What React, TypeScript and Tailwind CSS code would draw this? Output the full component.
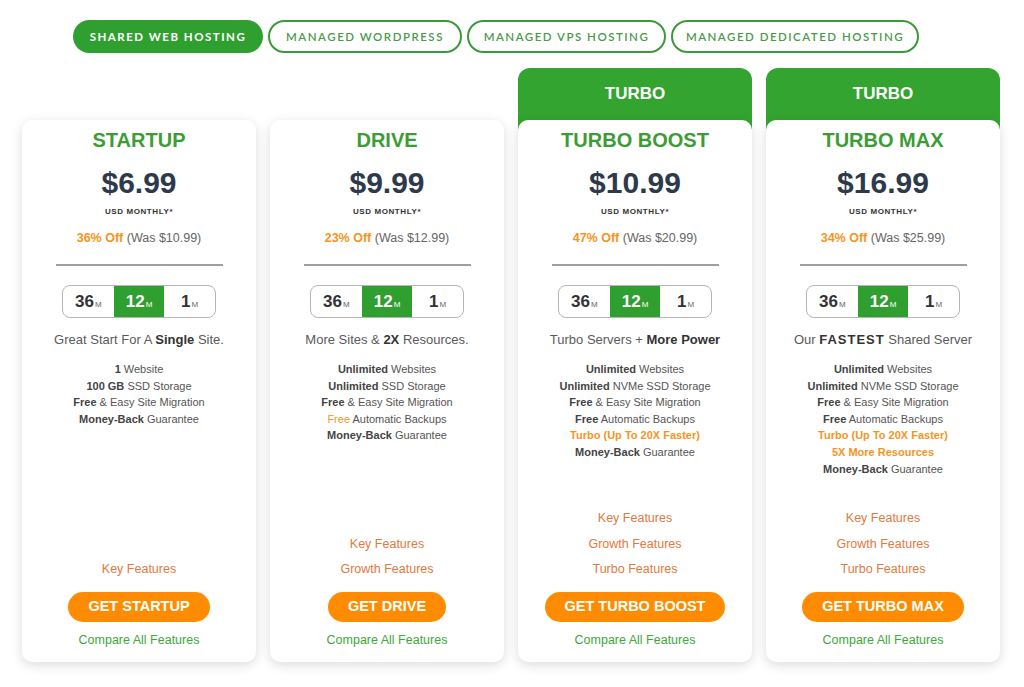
import React from 'react';

type Feature = { parts: Array<{ t: string; b?: boolean; o?: boolean }> };

type Plan = {
  name: string;
  price: string;
  off: string;
  was: string;
  tagline: React.ReactNode;
  features: Feature['parts'][];
  links: string[];
  cta: string;
  turbo?: boolean;
};

const plans: Plan[] = [
  {
    name: 'STARTUP',
    price: '$6.99',
    off: '36% Off',
    was: '(Was $10.99)',
    tagline: (
      <>
        Great Start For A <b className="text-[#333]">Single</b> Site.
      </>
    ),
    features: [
      [{ t: '1', b: true }, { t: ' Website' }],
      [{ t: '100 GB', b: true }, { t: ' SSD Storage' }],
      [{ t: 'Free', b: true }, { t: ' & Easy Site Migration' }],
      [{ t: 'Money-Back', b: true }, { t: ' Guarantee' }],
    ],
    links: ['Key Features'],
    cta: 'GET STARTUP',
  },
  {
    name: 'DRIVE',
    price: '$9.99',
    off: '23% Off',
    was: '(Was $12.99)',
    tagline: (
      <>
        More Sites &amp; <b className="text-[#333]">2X</b> Resources.
      </>
    ),
    features: [
      [{ t: 'Unlimited', b: true }, { t: ' Websites' }],
      [{ t: 'Unlimited', b: true }, { t: ' SSD Storage' }],
      [{ t: 'Free', b: true }, { t: ' & Easy Site Migration' }],
      [{ t: 'Free', o: true }, { t: ' Automatic Backups' }],
      [{ t: 'Money-Back', b: true }, { t: ' Guarantee' }],
    ],
    links: ['Key Features', 'Growth Features'],
    cta: 'GET DRIVE',
  },
  {
    name: 'TURBO BOOST',
    price: '$10.99',
    off: '47% Off',
    was: '(Was $20.99)',
    tagline: (
      <>
        Turbo Servers + <b className="text-[#333]">More Power</b>
      </>
    ),
    features: [
      [{ t: 'Unlimited', b: true }, { t: ' Websites' }],
      [{ t: 'Unlimited', b: true }, { t: ' NVMe SSD Storage' }],
      [{ t: 'Free', b: true }, { t: ' & Easy Site Migration' }],
      [{ t: 'Free', b: true }, { t: ' Automatic Backups' }],
      [{ t: 'Turbo (Up To 20X Faster)', b: true, o: true }],
      [{ t: 'Money-Back', b: true }, { t: ' Guarantee' }],
    ],
    links: ['Key Features', 'Growth Features', 'Turbo Features'],
    cta: 'GET TURBO BOOST',
    turbo: true,
  },
  {
    name: 'TURBO MAX',
    price: '$16.99',
    off: '34% Off',
    was: '(Was $25.99)',
    tagline: (
      <>
        Our <b className="text-[#333] tracking-[1px]">FASTEST</b> Shared Server
      </>
    ),
    features: [
      [{ t: 'Unlimited', b: true }, { t: ' Websites' }],
      [{ t: 'Unlimited', b: true }, { t: ' NVMe SSD Storage' }],
      [{ t: 'Free', b: true }, { t: ' & Easy Site Migration' }],
      [{ t: 'Free', b: true }, { t: ' Automatic Backups' }],
      [{ t: 'Turbo (Up To 20X Faster)', b: true, o: true }],
      [{ t: '5X More Resources', b: true, o: true }],
      [{ t: 'Money-Back', b: true }, { t: ' Guarantee' }],
    ],
    links: ['Key Features', 'Growth Features', 'Turbo Features'],
    cta: 'GET TURBO MAX',
    turbo: true,
  },
];

const tabs = [
  { label: 'SHARED WEB HOSTING', w: 'w-[190px]', active: true },
  { label: 'MANAGED WORDPRESS', w: 'w-[194px]' },
  { label: 'MANAGED VPS HOSTING', w: 'w-[199px]' },
  { label: 'MANAGED DEDICATED HOSTING', w: 'w-[248px]' },
];

function Term({ n, active }: { n: string; active?: boolean }) {
  return (
    <div
      className={`flex-1 flex items-center justify-center ${
        active ? 'bg-[#2f9f2f] text-white' : 'text-[#333]'
      }`}
    >
      <span className="text-[17px] font-bold leading-none">{n}</span>
      <span className={`text-[8px] leading-none mt-[7px] ml-[1px] ${active ? 'text-white' : 'text-[#666]'}`}>M</span>
    </div>
  );
}

function PlanCard({ plan }: { plan: Plan }) {
  return (
    <div className="w-[234px] flex flex-col">
      {plan.turbo ? (
        <div className="h-[62px] -mb-[10px] bg-[#33a42f] rounded-t-[12px] flex justify-center">
          <div className="h-[52px] flex items-center text-white font-bold text-[17px]">TURBO</div>
        </div>
      ) : (
        <div className="h-[52px]" />
      )}
      <div className="relative flex-1 bg-white rounded-[10px] shadow-[0_3px_12px_rgba(0,0,0,0.14)] flex flex-col items-center text-center px-2">
        <div className="pt-2 text-[20px] leading-[24px] font-bold text-[#3c9c36]">{plan.name}</div>
        <div className="mt-[13px] text-[30px] leading-[36px] font-bold text-[#2e3a4b]">{plan.price}</div>
        <div className="mt-[5px] text-[8px] leading-[12px] font-bold text-[#333] tracking-[0.6px]">USD MONTHLY*</div>
        <div className="mt-[12px] text-[12.5px] leading-[16px] text-[#666]">
          <span className="font-bold text-[#f7941d]">{plan.off}</span> {plan.was}
        </div>
        <div className="mt-[18px] w-[167px] h-[2px] bg-[#9aa0a6]" />
        <div className="mt-[19px] w-[154px] h-[33px] border border-[#b5b5b5] rounded-[8px] overflow-hidden flex">
          <Term n="36" />
          <Term n="12" active />
          <Term n="1" />
        </div>
        <div className="mt-[13px] text-[13px] leading-[18px] text-[#5a5a5a]">{plan.tagline}</div>
        <div className="mt-[12px] flex flex-col text-[11px] leading-[16.6px] text-[#555]">
          {plan.features.map((f, i) => (
            <div key={i}>
              {f.map((p, j) => (
                <span
                  key={j}
                  className={`${p.b ? 'font-bold' : ''} ${p.o ? 'text-[#f7941d]' : p.b ? 'text-[#444]' : ''}`}
                >
                  {p.t}
                </span>
              ))}
            </div>
          ))}
        </div>
        <div className="mt-auto flex flex-col items-center gap-[7.5px] text-[12.5px] leading-[18px] text-[#e07a3e]">
          {plan.links.map(l => (
            <div key={l}>{l}</div>
          ))}
        </div>
        <div className="mt-[14px] h-[30px] px-[20px] rounded-full bg-[#ff8c00] text-white font-bold text-[14.5px] flex items-center">
          {plan.cta}
        </div>
        <div className="mt-[10px] mb-[14px] text-[12.5px] leading-[16px] text-[#3ea83a]">Compare All Features</div>
      </div>
    </div>
  );
}

export default function App() {
  return (
    <div className="w-[1024px] h-[687px] bg-white overflow-hidden font-['Liberation_Sans',Arial,sans-serif]">
      <div className="pt-[20px] pl-[73px] flex gap-[5px]">
        {tabs.map(t => (
          <div
            key={t.label}
            className={`${t.w} h-[33px] rounded-full flex items-center justify-center text-[11.5px] tracking-[1.5px] font-['Lato',sans-serif] ${
              t.active
                ? 'bg-[#2f9f2f] text-white font-bold'
                : 'border-2 border-[#3a9a38] text-[#4a9a4a] font-semibold'
            }`}
          >
            {t.label}
          </div>
        ))}
      </div>
      <div className="mt-[15px] pl-[22px] flex gap-[14px] h-[594px]">
        {plans.map(p => (
          <PlanCard key={p.name} plan={p} />
        ))}
      </div>
    </div>
  );
}
